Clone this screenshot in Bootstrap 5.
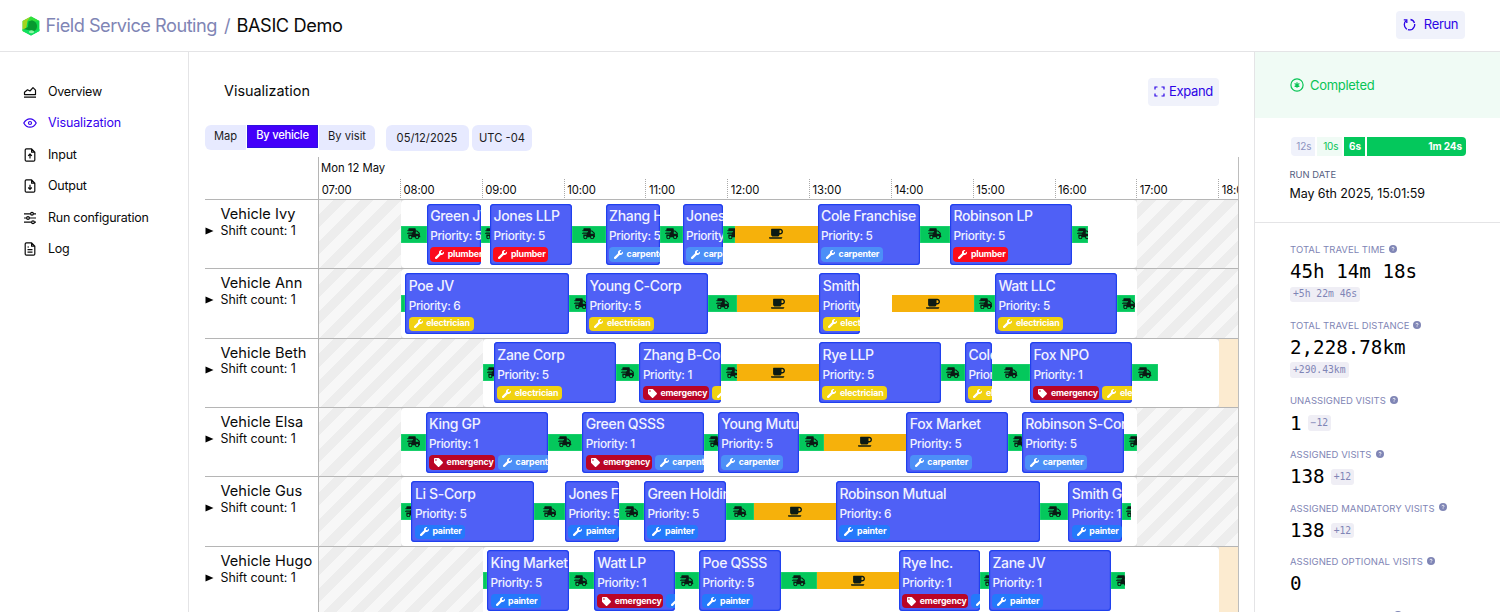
<!DOCTYPE html>
<html lang="en">
<head>
<meta charset="utf-8">
<title>Field Service Routing / BASIC Demo</title>
<link href="https://cdn.jsdelivr.net/npm/bootstrap@5.3.0/dist/css/bootstrap.min.css" rel="stylesheet">
<style>
  body { font-family: Inter, "Liberation Sans", sans-serif; font-size: 13px; line-height: 1; color: #0a0a0a; height: 612px; overflow: hidden; background: #fff; }
  svg { display: block; flex: none; }
  .fit { white-space: nowrap; }
  .topbar { height: 52px; border-bottom: 1px solid #e4e4e6; padding: 0 35px 0 22px; font-size: 18.2px; letter-spacing: -.5px; }
  .crumb { color: #7f85b5; }
  .soft-btn { background: #f0f2fb; color: #2c05e6; border: 0; border-radius: 4px; height: 28px; font-size: 13px; letter-spacing: -.35px; line-height: 1; padding: 0; }
  .main { height: 560px; overflow: hidden; }
  .side { width: 189px; border-right: 1px solid #e4e4e6; padding: 24px 0 0 23px; }
  .side .nav-link { height: 31.5px; padding: 0; color: #0a0a0a; gap: 11px; font-size: 12.5px; line-height: 1; letter-spacing: -.25px; }
  .side .nav-link.active { color: #3500ee; letter-spacing: -.12px; }
  .center { width: 1065px; padding-left: 16px; }
  .page-head { height: 72px; padding: 0 35px 0 19px; font-size: 14.4px; padding-top: 7px; }
  .tools { height: 27px; font-size: 11.3px; padding-top: .5px; }
  .pill { background: #e7eaff; height: 25.5px; border: 0; border-radius: 0; padding: 0 0 1px; font-size: 11.2px; line-height: 1; color: #1b1b22; }
  .pill.on { background: #4400fa; color: #fff; height: 23px; box-shadow: inset 0 0 0 1px #2c13e0; font-weight: 500; padding: 0; letter-spacing: -.25px; }
  .pill.low { padding: 1.5px 0 0; margin-top: .5px; }
  .sched { width: 1034px; margin-top: 6px; border-right: 1px solid #bdbdbd; }
  .legend-col { width: 114px; border-right: 1px solid #b5b5b5; flex: none; }
  .sched-head { height: 43px; border-bottom: 1px solid #b5b5b5; font-size: 11.3px; }
  .tick { flex: none; width: 81.82px; height: 21.5px; border-left: 1px dotted #aaa; padding: 6px 0 0 2.5px; font-size: 11.3px; letter-spacing: -.1px; }
  .tick:first-child { border-left-color: transparent; }
  .tick-row { margin-left: -.8px; }
  .v-row { height: 69.35px; border-bottom: 1px solid #b5b5b5; }
  .v-name { font-size: 14.6px; padding: 7px 0 0 15.5px; height: 24px; }
  .v-shift { font-size: 12.4px; height: 14px; gap: 7px; }
  .track { width: 919px; overflow: hidden; }
  .hours { position: absolute; inset: 0; background: #e2e2e2; }
  .hatch { background: repeating-linear-gradient(-45deg, #f7f7f7 0 9.6px, #ededed 9.6px 19.2px); }
  .late { background: #fcebd0; }
  .shift { background: #fff; border-radius: 4px; }
  .seg { flex: none; overflow: hidden; }
  .trip { height: 17px; background: #04c85c; box-shadow: inset 0 0 0 .5px #2fd57c; }
  .trip-wide { padding-left: 5px; padding-right: 5px; }
  .pause { height: 17px; background: #f6b10b; }
  .visit { height: 61px; background: #4f60f6; border-radius: 3.5px; box-shadow: inset 0 0 0 1.2px #2040ee; color: #f1f2ff; padding: 4.5px 0 0 3.5px; white-space: nowrap; }
  .visit-name { font-size: 14px; line-height: 15px; font-weight: 500; letter-spacing: -.34px; }
  .visit-prio { font-size: 11.8px; line-height: 14px; margin-top: 6px; font-weight: 500; letter-spacing: -.33px; }
  .skills { margin-top: 4px; gap: 3px; }
  .skill { height: 14.6px; border-radius: 4px; font-size: 8.8px; font-weight: 700; color: #fff; padding-left: 5px; gap: 3.5px; flex: none; letter-spacing: -.17px; }
  .plumber { background: #fb0b1c; width: 55px; }
  .carpenter { background: #4c8ff7; width: 62px; }
  .electrician { background: #f1d210; width: 65px; }
  .emergency { background: #ba0526; width: 66px; }
  .painter { background: #2479fb; width: 50.5px; }
  .info { width: 246px; border-left: 1px solid #e4e4e6; }
  .state { height: 66px; background: #f0fbf5; color: #08c455; padding-left: 35px; font-size: 13px; gap: 6px; letter-spacing: -.3px; }
  .timing { margin: 19px 0 0 36px; width: 174.5px; height: 18.6px; gap: 2px; font-size: 10px; border-radius: 4px; overflow: hidden; letter-spacing: -.1px; }
  .timing div { display: flex; align-items: center; justify-content: flex-end; padding-right: 3.5px; }
  .run { padding-left: 34.5px; height: 67.4px; border-bottom: 1px solid #e4e4e6; }
  .metrics { padding: 20px 0 0 35px; }
  .m-label { color: #7f85b5; font-size: 9.5px; height: 14px; gap: 4px; letter-spacing: .05px; }
  .m-value { font-family: "DejaVu Sans Mono", monospace; font-size: 19.2px; height: 24px; margin-top: 3px; gap: 6px; color: #000; }
  .delta { font-family: "DejaVu Sans Mono", monospace; font-size: 9.7px; color: #7f85b5; background: #efeef5; border-radius: 3px; height: 15.5px; padding: 0 3px; display: inline-flex; align-items: center; }
</style>
</head>
<body>
<svg width="0" height="0" class="position-absolute">
  <symbol id="truck" viewBox="0 0 640 512"><path d="M624 352h-16V243.9c0-12.7-5.1-24.9-14.1-33.9L494 110.1c-9-9-21.2-14.1-33.9-14.1H416V48c0-26.5-21.5-48-48-48H112C85.5 0 64 21.5 64 48v48H8c-4.4 0-8 3.6-8 8v16c0 4.4 3.6 8 8 8h272c4.4 0 8 3.6 8 8v16c0 4.4-3.6 8-8 8H40c-4.4 0-8 3.6-8 8v16c0 4.4 3.6 8 8 8h208c4.4 0 8 3.6 8 8v16c0 4.4-3.6 8-8 8H8c-4.4 0-8 3.6-8 8v16c0 4.4 3.6 8 8 8h208c4.4 0 8 3.6 8 8v16c0 4.4-3.6 8-8 8H64v128c0 53 43 96 96 96s96-43 96-96h128c0 53 43 96 96 96s96-43 96-96h48c8.8 0 16-7.2 16-16v-32c0-8.8-7.2-16-16-16zM160 464c-26.5 0-48-21.5-48-48s21.5-48 48-48 48 21.5 48 48-21.5 48-48 48zm320 0c-26.5 0-48-21.5-48-48s21.5-48 48-48 48 21.5 48 48-21.5 48-48 48zm80-208H416V144h44.1l99.9 99.9V256z"/></symbol>
  <symbol id="cup" viewBox="0 0 640 512"><path d="M192 384h192c53 0 96-43 96-96h32c70.6 0 128-57.4 128-128S582.6 32 512 32H120c-13.3 0-24 10.7-24 24v232c0 53 43 96 96 96zM512 96c35.3 0 64 28.7 64 64s-28.7 64-64 64h-32V96h32zm47.7 384H48.3c-47.6 0-61-64-36-64h583.3c25 0 11.8 64-35.9 64z"/></symbol>
  <symbol id="wrench" viewBox="0 0 512 512"><path d="M507.73 109.1c-2.24-9.03-13.54-12.09-20.12-5.51l-74.36 74.36-67.88-11.31-11.31-67.88 74.36-74.36c6.62-6.62 3.43-17.9-5.66-20.16-47.38-11.74-99.55.91-136.58 37.93-39.64 39.64-50.55 97.1-34.05 147.2L18.74 402.76c-24.99 24.99-24.99 65.51 0 90.5 24.99 24.99 65.51 24.99 90.5 0l213.21-213.21c50.12 16.71 107.47 5.68 147.37-34.22 37.07-37.07 49.7-89.32 37.91-136.73z"/></symbol>
  <symbol id="tag" viewBox="0 0 512 512"><path d="M0 252.118V48C0 21.49 21.49 0 48 0h204.118a48 48 0 0 1 33.941 14.059l211.882 211.882c18.745 18.745 18.745 49.137 0 67.882L293.823 497.941c-18.745 18.745-49.137 18.745-67.882 0L14.059 286.059A48 48 0 0 1 0 252.118zM112 64c-26.51 0-48 21.49-48 48s21.49 48 48 48 48-21.490 48-48-21.490-48-48-48z"/></symbol>
  <symbol id="help" viewBox="0 0 16 16"><circle cx="8" cy="8" r="8" fill="#7f85b5"/><path d="M5.900 6.400c0-1.300.9-2.100 2.100-2.100s2.200.8 2.200 2c0 1.500-2.100 1.600-2.100 3M8.100 10.800v1.400" fill="none" stroke="#fff" stroke-width="1.700"/></symbol>
</svg>

<header class="topbar d-flex align-items-center">
  <svg width="18" height="20" viewBox="0 0 18 20"><path d="M9 .5 17.400 5v10L9 19.500.6 15V5z" fill="#10d84a"/><path d="M9 .5.6 5v10L3.500 16.500 5.500 5z" fill="#a4d420"/><path d="M9 .5 17.400 5 12 5.500 5.500 5z" fill="#2fdf3a"/><path d="M6.500 5.500 10 4.200Q15 6 15 10t-3 5H6.500L1 13.500 6 11z" fill="#07992f"/><path d="M.6 13 6 14l6 1.200 5.400-2.200v2L9 19.500.6 15z" fill="#10e060"/><ellipse cx="9.500" cy="15.800" rx="2.600" ry="1.500" fill="#8df5a4"/></svg>
  <span class="crumb fit" style="margin-left:5.500px">Field Service Routing</span>
  <span class="crumb" style="margin:0 6.500px 0 7px">/</span>
  <span class="fit" style="letter-spacing:-.4px">BASIC Demo</span>
  <button class="btn soft-btn ms-auto d-flex align-items-center justify-content-center" style="width:69px;gap:8px;margin-bottom:2px">
    <svg width="13" height="13" viewBox="0 0 13 13" fill="none" stroke="currentColor" stroke-width="1.300"><path d="M3.300 2.500A5.200 5.200 0 1 0 7.500 1.500" stroke-dasharray="10 1"/><path d="M.8 1.900h3v3"/></svg>
    <span class="fit">Rerun</span>
  </button>
</header>

<div class="main d-flex">
  <nav class="side nav flex-column flex-nowrap">
    <a class="nav-link d-flex align-items-center"><svg width="14" height="14" viewBox="0 0 14 14" fill="none" stroke="currentColor" stroke-width="1.200" stroke-linejoin="round"><path d="M1.500 9.600V7.300L4.500 4.800 7 6l3-3.300 2.500 2.500v4.400zM1 12.200h12"/></svg><span class="fit">Overview</span></a>
    <a class="nav-link active d-flex align-items-center"><svg width="14" height="14" viewBox="0 0 14 14" fill="none" stroke="currentColor" stroke-width="1.200"><path d="M.8 7C2.300 4.200 4.400 2.800 7 2.800S11.700 4.200 13.200 7C11.700 9.800 9.600 11.200 7 11.200S2.300 9.800.8 7z"/><circle cx="7" cy="7" r="1.500"/></svg><span class="fit">Visualization</span></a>
    <a class="nav-link d-flex align-items-center"><svg width="14" height="14" viewBox="0 0 14 14" fill="none" stroke="currentColor" stroke-width="1.200" stroke-linejoin="round"><path d="M2.200 2v10q0 1.200 1.200 1.200h7.200q1.200 0 1.200-1.200V4.200L8.600.8H3.400Q2.200.8 2.200 2zM8.600.8v3.400h3.200M7 10.500V6M5.200 7.800 7 6l1.800 1.800"/></svg><span class="fit">Input</span></a>
    <a class="nav-link d-flex align-items-center"><svg width="14" height="14" viewBox="0 0 14 14" fill="none" stroke="currentColor" stroke-width="1.200" stroke-linejoin="round"><path d="M2.200 2v10q0 1.200 1.200 1.200h7.200q1.200 0 1.200-1.200V4.200L8.600.8H3.400Q2.200.8 2.200 2zM8.600.8v3.400h3.200M7 5.800v4.500M5.200 8.500 7 10.300l1.800-1.800"/></svg><span class="fit">Output</span></a>
    <a class="nav-link d-flex align-items-center"><svg width="14" height="14" viewBox="0 0 14 14" fill="none" stroke="currentColor" stroke-width="1.200"><path d="M1 2.800h6.500M10.500 2.800H13M1 7h2.500M6.500 7H13M1 11.200h7.500M11.500 11.200H13"/><circle cx="9" cy="2.800" r="1.400"/><circle cx="5" cy="7" r="1.400"/><circle cx="10" cy="11.200" r="1.400"/></svg><span class="fit">Run configuration</span></a>
    <a class="nav-link d-flex align-items-center"><svg width="14" height="14" viewBox="0 0 14 14" fill="none" stroke="currentColor" stroke-width="1.200" stroke-linejoin="round"><path d="M2.200 2v10q0 1.200 1.200 1.200h7.200q1.200 0 1.200-1.200V4.200L8.600.8H3.400Q2.200.8 2.200 2zM8.600.8v3.400h3.200M4.500 5h1.500M4.500 7.600h5M4.500 10.200h5"/></svg><span class="fit">Log</span></a>
  </nav>

  <main class="center">
    <div class="page-head d-flex align-items-center">
      <span class="fit">Visualization</span>
      <button class="btn soft-btn ms-auto d-flex align-items-center justify-content-center" style="width:71px;gap:4px">
        <svg width="11" height="11" viewBox="0 0 11 11" fill="none" stroke="currentColor" stroke-width="1.200"><path d="M1 3.500V1h2.500M7.500 1H10v2.500M10 7.500V10H7.500M3.500 10H1V7.500"/></svg>
        <span class="fit">Expand</span>
      </button>
    </div>
    <div class="tools d-flex">
      <button class="btn pill fit rounded-start" style="width:41px">Map</button>
      <button class="btn pill on fit" style="width:71px;margin:0 1px">By vehicle</button>
      <button class="btn pill fit rounded-end" style="width:56px">By visit</button>
      <button class="btn pill low fit rounded" style="width:83px;margin-left:10.500px">05/12/2025</button>
      <button class="btn pill low fit rounded" style="width:60px;margin-left:3.500px">UTC -04</button>
    </div>
    <section class="sched">
      <div class="sched-head d-flex">
        <div class="legend-col"></div>
        <div class="track">
          <div class="fit" style="height:21.500px;padding:5.500px 0 0 2px">Mon 12 May</div>
          <div class="d-flex tick-row" id="ticks"></div>
        </div>
      </div>
      <div id="rows"></div>
    </section>
  </main>

  <aside class="info">
    <div class="state d-flex align-items-center">
      <svg width="14" height="14" viewBox="0 0 14 14" fill="none" stroke="currentColor" stroke-width="1.200"><circle cx="7" cy="7" r="6.100"/><path d="M7 4.200v5.600M4.600 5.600l4.800 2.800M9.400 5.600 4.600 8.400"/></svg>
      <span class="fit">Completed</span>
    </div>
    <div class="timing d-flex">
      <div style="width:24px;background:#f0f2fb;color:#8d92bf">12s</div>
      <div style="width:25px;background:#f0fbf5;color:#08c455">10s</div>
      <div style="width:20.500px;background:#04c85c;color:#fff" class="fw-bold">6s</div>
      <div style="background:#04c85c;color:#fff" class="flex-fill fw-bold">1m 24s</div>
    </div>
    <div class="run">
      <div class="fit" style="padding-top:14px;font-size:9.400px;color:#56607f;height:32.500px">RUN DATE</div>
      <div class="fit" style="font-size:12.500px;letter-spacing:-.08px">May 6th 2025, 15:01:59</div>
    </div>
    <div class="metrics" id="metrics"></div>
  </aside>
</div>

<script src="https://cdn.jsdelivr.net/npm/bootstrap@5.3.0/dist/js/bootstrap.bundle.min.js"></script>
<script>
// Each plan: vehicle, shift start, shift end, then segments [kind, end, name, priority, skills]
// with horizontal positions on the board's scale; every segment starts where the last one ended.
const ORIGIN = 319;
const P = ['plumber'], C = ['carpenter'], E = ['electrician'], A = ['painter'], X = 'emergency';
const plans = [
  ['Ivy', 401, 1137, [['t',426.7],['v',480.7,'Green JV',5,P],['t',490],['v',571.8,'Jones LLP',5,P],['t',605.6],['v',660,'Zhang Holding',5,C],['t',682.6],['v',723.4,'Jones Corp',5,C],['t',735.4],['b',817.6],['v',920,'Cole Franchise',5,C],['t',950],['v',1072.3,'Robinson LP',5,P],['t',1087.7]]],
  ['Ann', 401, 1137, [['t',405.2],['v',568.6,'Poe JV',6,E],['t',586],['v',708.3,'Young C-Corp',5,E],['t',737],['b',819.4],['v',860.2,'Smith Corp',5,E],['g',891.6],['b',973.8],['t',995],['v',1117.2,'Watt LLC',5,E],['t',1135]]],
  ['Beth', 483, 1219, [['t',493.8],['v',616,'Zane Corp',5,E],['t',639.4],['v',721.2,'Zhang B-Corp',1,[X,'electrician']],['t',737],['b',819],['v',941.2,'Rye LLP',5,E],['t',965],['v',991.9,'Cole Inc.',5,E],['t',1030],['v',1132.2,'Fox NPO',1,[X,'electrician']],['t',1158]]],
  ['Elsa', 401, 1137, [['t',425.6],['v',547.9,'King GP',1,[X,'carpenter']],['t',582.2],['v',704.5,'Green QSSS',1,[X,'carpenter']],['t',717.8],['v',799.5,'Young Mutual',5,C],['t',824],['b',906.4],['v',1008.5,'Fox Market',5,C],['t',1021.7],['v',1124,'Robinson S-Corp',5,C],['t',1137]]],
  ['Gus', 401, 1137, [['t',411.4],['v',533.7,'Li S-Corp',5,A],['t',564.9],['v',619,'Jones Franchise',5,A],['t',644],['v',726,'Green Holding',5,A],['t',753.8],['b',836],['v',1040.3,'Robinson Mutual',6,A],['t',1068.3],['v',1122.2,'Smith GP',1,A],['t',1130.8]]],
  ['Hugo', 483, 1219, [['t',487],['v',568.8,'King Market',5,A],['t',593.7],['v',675.4,'Watt LP',1,[X,'painter']],['t',699],['v',780.8,'Poe QSSS',5,A],['t',816.8],['b',898.8],['v',980.4,'Rye Inc.',1,[X,'painter']],['t',989],['v',1111.3,'Zane JV',1,A],['t',1125]]]
];
const icon = (id, w, h, c) => `<svg class="mx-${c ? 0 : 'auto'}" width="${w}" height="${h}" fill="${c || '#0b1a14'}"><use href="#${id}"/></svg>`;
const skill = s => `<span class="skill ${s} d-inline-flex align-items-center">${icon(s === X ? 'tag' : 'wrench', 9, 9, '#fff')}<span>${s}</span></span>`;
function segment([kind, , name, prio, skills], w) {
  const size = `style="width:${w.toFixed(1)}px"`;
  if (kind === 't') return w < 6 ? `<div class="seg trip" ${size}></div>`
    : `<div class="seg trip d-flex align-items-center ${w > 12 ? 'trip-wide' : ''}" ${size}>${w > 12 ? icon('truck', 13.5, 11.5) : `<div class="ps-1">${icon('truck', 13.5, 11.5)}</div>`}</div>`;
  if (kind === 'b') return `<div class="seg pause d-flex align-items-center" ${size}>${icon('cup', 14, 11.5)}</div>`;
  if (kind === 'g') return `<div class="seg" ${size}></div>`;
  return `<div class="seg visit" ${size}><div class="visit-name">${name}</div><div class="visit-prio">Priority: ${prio}</div><div class="skills d-flex">${skills.map(skill).join('')}</div></div>`;
}
document.getElementById('rows').innerHTML = plans.map(([name, from, to, segs]) => {
  let x = from;
  const bars = segs.map(s => { const w = s[1] - x; x = s[1]; return segment(s, w); }).join('');
  return `<div class="v-row d-flex">
    <div class="legend-col"><div class="v-name fit">Vehicle ${name}</div>
      <div class="v-shift d-flex align-items-center"><svg width="8.5" height="8" viewBox="0 0 8.500 8"><path d="M.5.5 8.500 4l-8 3.500z"/></svg><span class="fit">Shift count: 1</span></div></div>
    <div class="track position-relative">
      <div class="hours d-flex"><div class="hatch flex-shrink-0" style="width:${from - ORIGIN}px"></div><div class="shift flex-shrink-0" style="width:${to - from}px"></div><div class="${to > 1200 ? 'late' : 'hatch'} flex-fill"></div></div>
      <div class="position-relative d-flex align-items-center h-100" style="padding-left:${from - ORIGIN}px">${bars}</div>
    </div></div>`;
}).join('');
document.getElementById('ticks').innerHTML = Array.from({length: 12}, (_, i) => `<div class="tick fit">${String(i + 7).padStart(2, '0')}:00</div>`).join('');

const metrics = [['TOTAL TRAVEL TIME','45h 14m 18s','+5h 22m 46s',1],['TOTAL TRAVEL DISTANCE','2,228.78km','+290.43km',1],['UNASSIGNED VISITS','1','−12'],['ASSIGNED VISITS','138','+12'],['ASSIGNED MANDATORY VISITS','138','+12'],['ASSIGNED OPTIONAL VISITS','0',''],['','','']];
document.getElementById('metrics').innerHTML = metrics.map(([label, value, delta, below]) => {
  const d = delta ? `<span class="delta fit">${delta}</span>` : '';
  return `<div style="margin-bottom:${below ? 16 : 12.6}px"><div class="m-label d-flex align-items-center"><span class="fit" ${label ? '' : 'style="width:100px"'}>${label}</span><svg width="8" height="8" style="margin-bottom:2px"><use href="#help"/></svg></div>
  <div class="m-value d-flex align-items-center fit"><span>${value}</span>${below ? '' : d}</div>${below ? `<div class="d-flex" style="margin-top:2.600px;height:16px">${d}</div>` : ''}</div>`;
}).join('');
</script>
</body>
</html>
